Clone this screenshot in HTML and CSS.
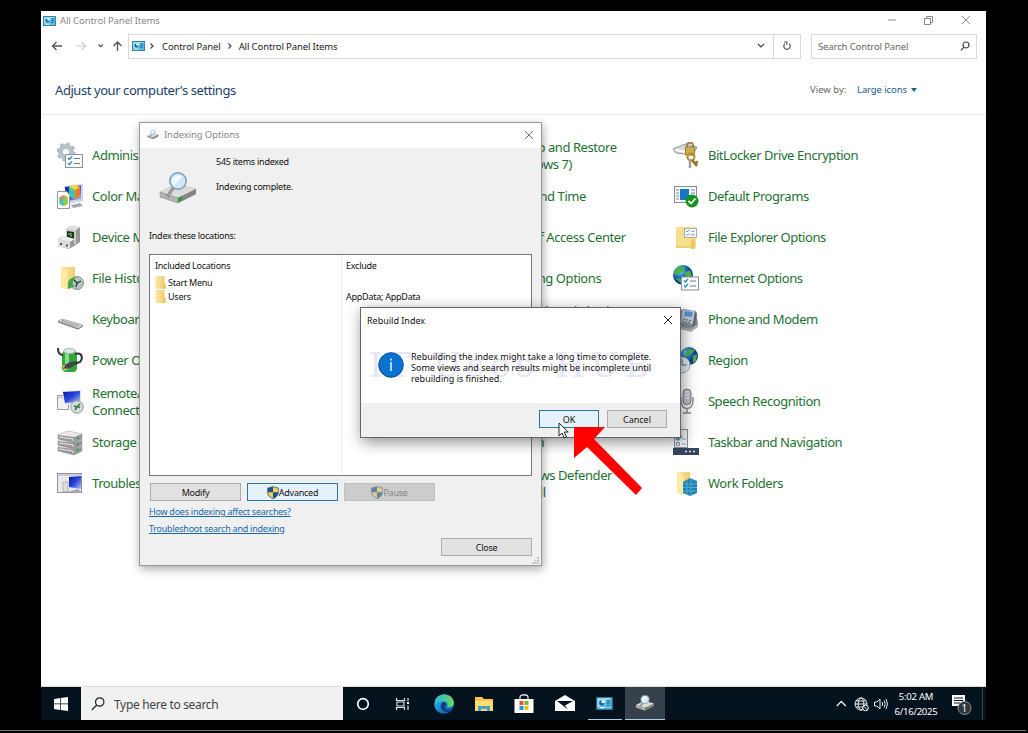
FILE: index.html
```
<!DOCTYPE html>
<html lang="en">
<head>
  <meta charset="UTF-8" />
  <meta name="viewport" content="width=device-width, initial-scale=1.0"/>
  <title>All Control Panel Items</title>
  <link rel="stylesheet" href="styles.css">
</head>
<body>
  <svg width="0" height="0" class="defs">
    <defs>
      <linearGradient id="gold" x2="1"><stop stop-color="#fce9a8"/><stop offset="1" stop-color="#eccb68"/></linearGradient>
      <linearGradient id="screen" x2="1" y2="1"><stop stop-color="#0718a8"/><stop offset=".5" stop-color="#2947d8"/><stop offset="1" stop-color="#b9c9f7"/></linearGradient>
      <radialGradient id="globe" cx=".35" cy=".3"><stop stop-color="#9ddcff"/><stop offset=".5" stop-color="#2584cf"/><stop offset="1" stop-color="#0b3f8c"/></radialGradient>
      <linearGradient id="edgeBlue" x2=".8" y2="1"><stop stop-color="#36c5b5"/><stop offset=".45" stop-color="#1d9be0"/><stop offset="1" stop-color="#0b4fa8"/></linearGradient>
      <linearGradient id="edgeGreen" x2="1"><stop stop-color="#2fb8d8"/><stop offset="1" stop-color="#69d85c"/></linearGradient>
    </defs>
    <symbol id="cpanel" viewBox="0 0 14 11">
      <rect x=".5" y=".5" width="13" height="10" fill="#5cbfe6" stroke="#2b7798"/>
      <path d="M1 1h12L1 9z" fill="#a4e0f5"/>
      <circle cx="4.600" cy="5" r="2.200" fill="#1b6e9b"/><path d="M4.600 5V2.600A2.400 2.400 0 0 1 7 5z" fill="#fff"/>
      <path d="M8.500 3h3.500M8.500 5h3.500M8.500 7h3.500" stroke="#1b6e9b"/><path d="M3 9h4" stroke="#fff"/>
    </symbol>
    <symbol id="drive" viewBox="0 0 40 34">
      <path d="M2 21 18 13 38 18v5L20 32 2 26z" fill="#8a8a8a"/>
      <path d="M2 21 18 13 38 18 20 27z" fill="#dcdcdc"/>
      <path d="M2 21 20 27v5L2 26z" fill="#b4b4b4" stroke="#888" stroke-width=".5"/>
      <path d="M20 27 38 18v5L20 32z" fill="#858585"/>
      <path d="m20 27 4-2v4l-4 2z" fill="#2c9a34"/>
      <path d="M16 16 9 26" stroke="#777" stroke-width="3"/><path d="M16 16 9 26" stroke="#ccc"/>
      <circle cx="20" cy="10" r="8.200" fill="#cfe8fa" stroke="#7f9db6" stroke-width="1.500"/>
      <path d="M14 10a6 6 0 0 1 10-4l-8 9z" fill="#f2faff"/>
    </symbol>
    <symbol id="shield" viewBox="0 0 12 13">
      <path d="M6 .5 11.500 2v4c0 3.500-2.500 5.500-5.500 6.700C3 11.500.5 9.500.5 6V2z" fill="#1c5585" stroke="#4c6a80" stroke-width=".6"/>
      <path d="M6 1 11 2.400V6.300H6zM1 6.300h5v5.900C3 11 1.200 9.200 1 6.300z" fill="#f1cf63"/>
    </symbol>
    <symbol id="checklist" viewBox="0 0 18 14">
      <rect x=".5" y=".5" width="17" height="13" fill="#fafafa" stroke="#8a929a"/>
      <path d="m3 4 1.300 1.500L7 2.500M3 9l1.300 1.500L7 7.500" fill="none" stroke="#258ac0" stroke-width="1.200"/>
      <path d="M9 4.500h6M9 9.500h6" stroke="#687c92"/>
    </symbol>
    <symbol id="folder" viewBox="0 0 10 13">
      <path d="M0 0h9v7l1 1v5H0z" fill="url(#gold)"/><path d="M8 13V8l1-1 1 1v5z" fill="#e9c85f"/>
    </symbol>
  </svg>

  <div class="desktop">
    <main class="explorer">
      <header class="titlebar">
        <svg class="app-icon"><use href="#cpanel"/></svg>
        <span class="title">All Control Panel Items</span>
        <svg class="window-buttons" viewBox="0 0 82 10">
          <path d="M0 5h8M74 1l8 8M82 1l-8 8" fill="none" stroke="#888"/>
          <path d="M36.500 3.500h6v6h-6zM38.500 3V1.500h6v6H43" fill="none" stroke="#888"/>
        </svg>
      </header>

      <nav class="toolbar">
        <svg class="nav-arrows" viewBox="0 0 72 12">
          <path d="M11 6H1.500M5.500 2l-4 4 4 4" fill="none" stroke="#555" stroke-width="1.300"/>
          <path d="M25 6h9.500M30.500 2l4 4-4 4" fill="none" stroke="#ccc" stroke-width="1.200"/>
          <path d="m47.500 4.500 2.200 2.200 2.200-2.200M66.500 11V2M62.500 6l4-4 4 4" fill="none" stroke="#555" stroke-width="1.300"/>
        </svg>
        <div class="address">
          <svg class="app-icon"><use href="#cpanel"/></svg>
          <svg class="crumb-arrow" viewBox="0 0 4 6"><path d="m.5.5 2.500 2.500L.5 5.500"/></svg>
          <span class="crumb">Control Panel</span>
          <svg class="crumb-arrow" viewBox="0 0 4 6"><path d="m.5.5 2.500 2.500L.5 5.500"/></svg>
          <span class="crumb">All Control Panel Items</span>
          <svg class="drop" viewBox="0 0 8 6"><path d="m1 1 3 3 3-3"/></svg>
        </div>
        <div class="refresh">
          <svg viewBox="0 0 10 10"><path d="M7.200 2.800A3.200 3.200 0 1 1 3 2.600M2 1h2.800v2.800" fill="none" stroke="#555" stroke-width="1.200"/></svg>
        </div>
        <div class="search">
          <span>Search Control Panel</span>
          <svg viewBox="0 0 10 10"><circle cx="6" cy="4" r="3"/><path d="M4 6.200.8 9.400"/></svg>
        </div>
      </nav>

      <section class="heading">
        <h1>Adjust your computer's settings</h1>
        <span class="view-label">View by:</span>
        <span class="view-value">Large icons</span>
        <i class="caret"></i>
      </section>

      <section class="items">
        <div class="item">
          <svg viewBox="0 0 27 27"><circle cx="9" cy="10" r="5.500" fill="none" stroke="#b8c1c9" stroke-width="5"/><circle cx="9" cy="10" r="8.500" fill="none" stroke="#adb7c0" stroke-width="2.200" stroke-dasharray="3.200 3.500"/><use href="#checklist" x="8" y="12" width="18" height="14"/></svg>
          <span>Administrative Tools</span>
        </div>
        <div class="item"><span>AutoPlay</span></div>
        <div class="item"><span>Backup and Restore (Windows 7)</span></div>
        <div class="item">
          <svg viewBox="0 0 27 27"><path d="m0 7 12-5 12 3-4 8-17-2z" fill="#d8d8d8" stroke="#999"/><path d="M3 8l14 3" stroke="#fff" stroke-width="2"/><path d="M14 6V3c0-3 6-3 6 0v3" fill="none" stroke="#9b854e" stroke-width="2"/><rect x="12.500" y="5" width="9" height="8" fill="#d3ad4d" stroke="#9b7e3c"/><circle cx="18" cy="15" r="3.500" fill="none" stroke="#b78a2a" stroke-width="2"/><path d="m19 18 5 6M22 21l3-1" stroke="#9b6e13" stroke-width="2.500"/><path d="M17 17v9" stroke="#9c9c9c" stroke-width="2.500"/></svg>
          <span>BitLocker Drive Encryption</span>
        </div>

        <div class="item">
          <svg viewBox="0 0 27 27"><path d="m7 3 19-2v17l-15 3z" fill="#d1d5df"/><path d="m8 4 16-1.500V16L9 18z" fill="url(#screen)"/><path d="m12 4 6-2 5 2v9l-5 3-6-3z" fill="#f3d72e"/><path d="m12 4 6 3v9l-6-3z" fill="#3cc7ad"/><path d="m18 7 5-3v9l-5 3z" fill="#ed7735"/><path d="M14 22l9-2 3 3-10 2z" fill="#a6a8ae"/><path d="M.5 8.500h9l3 3v14H.5z" fill="#fff" stroke="#999"/><path d="m2.500 14 4-2 4 2v7l-4 2-4-2z" fill="#f28f34"/><path d="m2.500 14 4 2v7l-4-2z" fill="#43bfd2"/><path d="m6.500 16 4-2v7l-4 2z" fill="#7ed348"/></svg>
          <span>Color Management</span>
        </div>
        <div class="item"><span>Credential Manager</span></div>
        <div class="item"><span>Date and Time</span></div>
        <div class="item">
          <svg viewBox="0 0 27 27"><rect x="1.500" y="3.500" width="22" height="16" fill="#f8f8f8" stroke="#8a8f96"/><rect x="7" y="6" width="9" height="11" fill="#1678c8"/><path d="M3 7h3M3 10h3M3 13h3M3 16h3M18 7h4M18 10h4" stroke="#72889a"/><circle cx="19" cy="18" r="6.500" fill="#13951c"/><path d="m15.500 18 2.500 2.500 4.500-5" fill="none" stroke="#fff" stroke-width="1.800"/></svg>
          <span>Default Programs</span>
        </div>

        <div class="item">
          <svg viewBox="0 0 27 27"><path d="m9 5 4-3 10 1v15l-6 4-8-2z" fill="#999"/><path d="m9 5 10 1v14L9 18z" fill="#cfcfcf"/><path d="m9 5 4-3 10 1-4 3z" fill="#e4e4e4"/><path d="m10 7 7 1v7l-7-1z" fill="#272c28"/><path d="M11 10h3v3" fill="none" stroke="#3b9f3b" stroke-width="2"/><path d="m1 15 5-3 11 3v7l-5 3-11-3z" fill="#999"/><path d="m1 15 12 3v7L1 22z" fill="#ddd"/><path d="m1 15 5-3 12 3-5 3z" fill="#eee"/><path d="M4 21v-2M10 22.500v-2" stroke="#555" stroke-width="2"/></svg>
          <span>Device Manager</span>
        </div>
        <div class="item"><span>Devices and Printers</span></div>
        <div class="item"><span>Ease of Access Center</span></div>
        <div class="item">
          <svg viewBox="0 0 27 27"><path d="M3 3h20v21H3z" fill="#f8df8c"/><path d="M18 25v-8l2-3 2 3v8z" fill="#ebc762"/><use href="#checklist" x="11" y="4" width="13" height="10"/><path d="M3 23h15" stroke="#dfbd5d"/></svg>
          <span>File Explorer Options</span>
        </div>

        <div class="item">
          <svg viewBox="0 0 27 27"><path d="M4 2h14v14l2 2v5L9 24 4 23z" fill="url(#gold)"/><path d="m4 2 6 4v18l-6-2z" fill="#ffe9a5"/><circle cx="20" cy="18" r="6.500" fill="#b9c5c3" stroke="#7f8e8b"/><path d="m17 15 3 3 4-2M20 18l-1 4" fill="none" stroke="#26312e" stroke-width="1.200"/><path d="M11 19c0-5 4-7 8-6-3 2-4 4-3 7l2 1-7 3z" fill="#42a644"/></svg>
          <span>File History</span>
        </div>
        <div class="item"><span>Fonts</span></div>
        <div class="item"><span>Indexing Options</span></div>
        <div class="item">
          <svg viewBox="0 0 27 27"><circle cx="10" cy="10" r="10" fill="url(#globe)"/><path d="M2 5c3-4 8-4 10-3l-2 4-5 4-4-1zM11 8l6-3 2 6-5 2zM2 13l6 1 1 5z" fill="#51ad45"/><use href="#checklist" x="8" y="11" width="18" height="15"/></svg>
          <span>Internet Options</span>
        </div>

        <div class="item">
          <svg viewBox="0 0 27 27"><path d="m1 15 4-2 21 6-5 4z" fill="#d3d5d7" stroke="#a0a2a5" stroke-width=".8"/><path d="m5 14.500 17 5M4 16l17 5" stroke="#868c94" stroke-dasharray="2 1"/><path d="m1 16 20 7 5-3" fill="none" stroke="#777"/></svg>
          <span>Keyboard</span>
        </div>
        <div class="item"><span>Mouse</span></div>
        <div class="item"><span>Network and Sharing Center</span></div>
        <div class="item">
          <svg viewBox="0 0 27 27"><path d="m4 5 7-2 12 2 2 13-6 7-15-4z" fill="#858c94"/><path d="m10 4 12 1-2 13-12-2z" fill="#c4cdd6"/><path d="m12 5 8 1-1 5-8-1z" fill="#5794cf"/><path d="m10 13 9 2M9 15l9 2" stroke="#50606e" stroke-dasharray="2 1"/><path d="m22 6 2 1-2 12-3 3z" fill="#5e666e"/><path d="m3 19 14 4 8-5v3l-7 5L3 22z" fill="#aab0b6"/></svg>
          <span>Phone and Modem</span>
        </div>

        <div class="item">
          <svg viewBox="0 0 27 27"><rect x="5" y="4" width="15" height="21" rx="4" fill="#33a73f"/><path d="M8 5h4v18H8z" fill="#8ade88"/><ellipse cx="12.500" cy="4" rx="6" ry="2.500" fill="#dce8e2" stroke="#a1b5aa"/><path d="M1 1q0 7 5 7M18 7c8-2 8 5 5 8l-5 2" fill="none" stroke="#333" stroke-width="2"/><path d="m6 19 7-4 7-1-3 5-8 4z" fill="#454545"/><path d="m4 20 4-1M6 23l4-1" stroke="#e1c557" stroke-width="1.500"/></svg>
          <span>Power Options</span>
        </div>
        <div class="item"><span>Programs and Features</span></div>
        <div class="item"><span>Recovery</span></div>
        <div class="item">
          <svg viewBox="0 0 27 27"><circle cx="16" cy="9" r="9" fill="url(#globe)"/><path d="m13 2 9 1-4 4-5 3zM20 9l4-2-1 7-3 2z" fill="#51ad45"/><circle cx="9" cy="18" r="8" fill="#e8edf2" stroke="#9ba9b6"/><path d="M9 12v6h5" fill="none" stroke="#527089"/></svg>
          <span>Region</span>
        </div>

        <div class="item">
          <svg viewBox="0 0 27 27"><path d="M.5 7.500h11v14H.5z" fill="#f0f2f5" stroke="#999"/><path d="M1 9.500h9" stroke="#ccc" stroke-width="2"/><path d="m5 3 19-1v13L8 17z" fill="#e0e3ea"/><path d="m6 4 17-1v11L8 15z" fill="url(#screen)"/><circle cx="20" cy="19" r="6.300" fill="#d8d9da" stroke="#989a9c"/><path d="m17 18 3 1-2 3M23 16l-2 2 2 2" fill="none" stroke="#25823c" stroke-width="1.600"/></svg>
          <span>RemoteApp and Desktop Connections</span>
        </div>
        <div class="item"><span>Security and Maintenance</span></div>
        <div class="item"><span>Sound</span></div>
        <div class="item">
          <svg viewBox="0 0 27 27"><path d="M8 9v4c0 10 12 10 12 0V9M14 20v5M10 25h8" fill="none" stroke="#8b8f98" stroke-width="1.500"/><rect x="10" y="1" width="8" height="16" rx="4" fill="#bbbfc8" stroke="#797e87"/><path d="M12 4h4M12 7h4M12 10h4" stroke="#f8f8f8"/></svg>
          <span>Speech Recognition</span>
        </div>

        <div class="item">
          <svg viewBox="0 0 27 27"><g id="disks"><path d="m1 18 10-4 14 3v5l-8 4L1 22z" fill="#999" stroke="#888" stroke-width=".5"/><path d="m1 18 10-4 14 3-8 3z" fill="#e9e9e9"/><path d="m2 20 14 2v2" fill="none" stroke="#e8e8e8"/><path d="M21 20v2" stroke="#35a43a" stroke-width="2"/></g><use href="#disks" y="-6"/><use href="#disks" y="-12"/></svg>
          <span>Storage Spaces</span>
        </div>
        <div class="item"><span>Sync Center</span></div>
        <div class="item"><span>System</span></div>
        <div class="item">
          <svg viewBox="0 0 27 27"><rect x="1.500" y=".5" width="13" height="18" fill="#f4f5f6" stroke="#878e96"/><path d="m3 9 2 2 4-4" fill="none" stroke="#2385b5" stroke-width="1.500"/><path d="M3.500 13.500h3v3h-3zM9 10h4M9 15h4" fill="none" stroke="#9099a2"/><path d="M0 19h26v7H0z" fill="#34445f"/><path d="M12 22.500h2m2 0h2m2 0h2" stroke="#dce4ee" stroke-width="1.500"/></svg>
          <span>Taskbar and Navigation</span>
        </div>

        <div class="item">
          <svg viewBox="0 0 27 27"><rect x=".5" y="3.500" width="24" height="19" fill="#e8eaef" stroke="#8c929c"/><path d="M1 5h24" stroke="#c8ced6" stroke-width="2"/><path d="m12 7 12-1v13l-12-2z" fill="url(#screen)"/><path d="M6 12h5v10H6z" fill="#ddd" stroke="#999" stroke-width=".6"/><path d="m10 22 11-3 4 4z" fill="#a7a9ad"/></svg>
          <span>Troubleshooting</span>
        </div>
        <div class="item"><span>User Accounts</span></div>
        <div class="item"><span>Windows Defender Firewall</span></div>
        <div class="item">
          <svg viewBox="0 0 27 27"><path d="M4 2h13v20l-8 3-5-3z" fill="url(#gold)"/><path d="m4 2 6 4v19l-6-3z" fill="#ffe9a5"/><path d="m10 12 7-4 7 3v12l-7 3-7-3z" fill="#1e83b1"/><path d="M10 14h14M10 17.500h14M10 21h14M14 11v14M18 9v16" stroke="#4fabd0"/></svg>
          <span>Work Folders</span>
        </div>
      </section>
    </main>

    <footer class="taskbar">
      <div class="start"><svg viewBox="0 0 14 14"><path d="M0 2l6-1v5.600H0zM6.700.9 14 0v6.600H6.700zM0 7.300h6V13l-6-1zM6.700 7.300H14V14l-7.300-1z" fill="#fff"/></svg></div>
      <div class="task-search">
        <svg viewBox="0 0 14 14"><circle cx="8.700" cy="5" r="4.200"/><path d="M5.700 8 .8 13"/></svg>
        <span>Type here to search</span>
      </div>
      <div class="task"><svg viewBox="0 0 20 20"><circle cx="10" cy="10" r="5.300" fill="none" stroke="#fff" stroke-width="1.700"/></svg></div>
      <div class="task"><svg viewBox="0 0 20 20"><path d="M3.500 4v2.500h8V4M3.500 16v-2.500h8V16M4 8h7v4H4zM15 4v3M15 11.500V16" fill="none" stroke="#ddd" stroke-width="1.200"/><path d="M14 8h2v2h-2z" fill="#fff"/></svg></div>
      <div class="task"><svg viewBox="0 0 20 20"><circle cx="10" cy="10" r="9.800" fill="url(#edgeBlue)"/><path d="M1 7C4-2 19-2 20 9c0 4-4 5-7 4 2-2 0-6-4-6-3 0-6 1-8 4z" fill="url(#edgeGreen)"/><path d="M9 8c-5 3-1 11 5 10 2 0 4-1 5-3-3 2-8 1-8-2 0-1 2-2 1-4-1-1-2-1-3-1z" fill="#123f80"/></svg></div>
      <div class="task"><svg viewBox="0 0 20 20"><path d="M1 3h7l2 2h9v12H1z" fill="#f4c64e"/><path d="M1 7h18v10H1z" fill="#ffdc71"/><path d="M4 17v-5h12v5h-3v-2H7v2z" fill="#4a9fc9"/></svg></div>
      <div class="task"><svg viewBox="0 0 20 20"><path d="M6 6V3c0-3 8-3 8 0v3" fill="none" stroke="#ddd" stroke-width="1.300"/><path d="M.5 5h19v14h-19z" fill="#fff"/><path d="M5.500 7h4v4h-4z" fill="#e6532a"/><path d="M10.500 7h4v4h-4z" fill="#7fb52b"/><path d="M5.500 12h4v4h-4z" fill="#2892dc"/><path d="M10.500 12h4v4h-4z" fill="#f5b81e"/></svg></div>
      <div class="task"><svg viewBox="0 0 20 20"><path d="M0 7 10 1l10 6v10H0z" fill="#fff"/><path d="M2 7h16l-8 4.500 3 4z" fill="#06131d"/></svg></div>
      <div class="task open"><svg class="panel-icon"><use href="#cpanel"/></svg></div>
      <div class="task open active"><svg><use href="#drive"/></svg></div>
      <div class="tray">
        <svg viewBox="0 0 52 16"><g fill="none" stroke="#eee"><path d="m.8 10 4.500-4.500L9.800 10" stroke-width="1.300"/><circle cx="25" cy="8" r="6"/><path d="M19 8h12M20 5h10M20 11h7"/><ellipse cx="25" cy="8" rx="2.800" ry="6"/><path d="M38.500 6v4h2.500l3 3V3l-3 3zM46 6q1.300 2 0 4M48 4.500q2.500 3.500 0 7M50 3q3 5 0 10"/></g><circle cx="29.500" cy="12" r="2.800" fill="#06131d" stroke="#fff"/><path d="m27.700 10.200 3.600 3.600" stroke="#fff"/></svg>
        <div class="clock"><span>5:02 AM</span><span>6/16/2025</span></div>
        <svg class="notify" viewBox="0 0 22 22"><path d="M1 2h13v11h-4l-3 3v-3H1z" fill="#fff"/><path d="M3 5h9M3 7.500h9M3 10h6" stroke="#06131d"/><circle cx="13.500" cy="15" r="6.500" fill="#30343c" stroke="#8b8f95"/><text x="10.500" y="18.700">1</text></svg>
      </div>
    </footer>

    <div class="dialog indexing">
      <header class="dialog-title">
        <svg class="small-drive"><use href="#drive"/></svg>
        <span>Indexing Options</span>
        <svg class="close" viewBox="0 0 10 10"><path d="m1 1 8 8M9 1 1 9"/></svg>
      </header>
      <div class="dialog-body">
        <div class="summary">
          <svg><use href="#drive"/></svg>
          <div class="status"><span>545 items indexed</span><span>Indexing complete.</span></div>
        </div>
        <div class="list-label">Index these locations:</div>
        <div class="locations">
          <div class="included">
            <div class="col-head">Included Locations</div>
            <div class="location"><svg><use href="#folder"/></svg>Start Menu</div>
            <div class="location"><svg><use href="#folder"/></svg>Users</div>
          </div>
          <div class="excluded">
            <div class="col-head">Exclude</div>
            <div class="location"></div>
            <div class="location">AppData; AppData</div>
          </div>
        </div>
        <div class="actions">
          <button>Modify</button>
          <button class="selected"><svg><use href="#shield"/></svg>Advanced</button>
          <button class="disabled"><svg><use href="#shield"/></svg>Pause</button>
        </div>
        <a>How does indexing affect searches?</a>
        <a>Troubleshoot search and indexing</a>
        <div class="close-row"><button>Close</button></div>
        <svg class="grip" viewBox="0 0 8 8"><path d="M6 0h2v2H6zM3 3h2v2H3zM6 3h2v2H6zM0 6h2v2H0zM3 6h2v2H3zM6 6h2v2H6z"/></svg>
      </div>
    </div>

    <div class="dialog rebuild">
      <header class="dialog-title">
        <span>Rebuild Index</span>
        <svg class="close" viewBox="0 0 10 10"><path d="m1 1 8 8M9 1 1 9"/></svg>
      </header>
      <div class="message">
        <div class="watermark">IT Uses HUB</div>
        <svg viewBox="0 0 26 26"><circle cx="13" cy="13" r="12.300" fill="#0873d1" stroke="#075296"/><path d="M13 10v9M13 6.500v2" stroke="#fff" stroke-width="1.400"/></svg>
        <p>Rebuilding the index might take a long time to complete.<br>Some views and search results might be incomplete until<br>rebuilding is finished.</p>
      </div>
      <div class="rebuild-actions">
        <button class="selected">OK</button>
        <button>Cancel</button>
      </div>
    </div>

    <svg class="pointer" viewBox="0 0 86 76">
      <path d="M16 5h31L36 17 84 66l-6 7-49-48-13 11z" fill="#f00"/>
      <path d="M1 1v13l3-3 2.300 5 2.200-1-2.300-5h4z" fill="#fff" stroke="#111" stroke-width=".9"/>
    </svg>
  </div>
  <div class="bottom-line"></div>
</body>
</html>
```

FILE: styles.css
```
* { box-sizing: border-box; }
body { margin: 0; width: 1028px; height: 733px; padding: 11px 0 0 41px; background: #000; overflow: hidden; font-family: "Noto Sans", "Open Sans", sans-serif; }
svg { display: block; flex: none; }
.defs { position: absolute; }
.desktop { position: relative; width: 945px; height: 709px; }
.explorer { height: 676px; background: #fff; border: 1px solid #ddd; border-width: 0 0 1px; }

.titlebar { display: flex; align-items: center; height: 19px; padding: 0 16px 0 2px; }
.app-icon { width: 13px; height: 10px; }
.title { margin-left: 4px; font-size: 9.5px; letter-spacing: -0.08px; color: #888; }
.window-buttons { width: 82px; height: 10px; margin-left: auto; margin-bottom: 2px; }
.toolbar { display: flex; align-items: center; height: 26px; margin-top: 3px; padding: 0 9px 0 10px; font-size: 9.5px; letter-spacing: -0.12px; }
.nav-arrows { width: 72px; height: 12px; margin-right: 5px; }
.address { display: flex; align-items: center; width: 646px; height: 25px; padding: 0 8px 0 3px; border: 1px solid #d9d9d9; }
.crumb-arrow { width: 4px; height: 6px; margin: 0 8px 0 5px; }
.crumb + .crumb-arrow { margin: 0 7px; }
.crumb-arrow path, .drop path { fill: none; stroke: #444; stroke-width: 1.2; }
.crumb { color: #222; }
.drop { width: 8px; height: 6px; margin-left: auto; }
.refresh { display: flex; align-items: center; justify-content: center; width: 27px; height: 25px; border: 1px solid #d9d9d9; border-left: 0; }
.refresh svg { width: 10px; height: 10px; }
.search { display: flex; align-items: center; justify-content: space-between; width: 166px; height: 25px; margin-left: auto; padding: 0 6px; border: 1px solid #d9d9d9; color: #666; }
.search svg { width: 10px; height: 10px; fill: none; stroke: #444; stroke-width: 1.2; }

.heading { display: flex; align-items: center; height: 56px; padding: 6px 14px 0; border-bottom: 1px solid #e6ebef; font-size: 9.5px; }
h1 { width: 755px; margin: 0; font-size: 13px; font-weight: normal; letter-spacing: -0.43px; color: #1d3f6b; }
.view-label { width: 47px; color: #666; }
.view-value { letter-spacing: -0.1px; color: #17608f; }
.caret { margin-left: 4px; border: 3px solid transparent; border-top: 4px solid #17608f; border-bottom: 0; }
.items { display: grid; grid-template-columns: repeat(4, 205.3px); grid-auto-rows: 41px; padding: 20px 0 0 16px; }
.item { display: flex; align-items: center; width: 189px; color: #247132; font-size: 13px; line-height: 17px; letter-spacing: -0.43px; }
.item svg { width: 27px; height: 27px; }
.item svg + span { margin-left: 8px; }
.item > span:first-child { margin-left: 35px; }

.dialog { position: absolute; border: 1px solid #999; background: #f0f0f0; box-shadow: 1px 3px 9px rgba(0, 0, 0, .35); font-size: 9px; color: #111; }
.dialog-title { display: flex; align-items: center; background: #fff; }
.close { width: 10px; height: 10px; margin-left: auto; fill: none; stroke: #777; }
.indexing { left: 98px; top: 111px; width: 403px; height: 444px; letter-spacing: -0.25px; }
.indexing .dialog-title { height: 25px; padding: 0 7px 2px; color: #888; font-size: 9.5px; letter-spacing: -0.1px; }
.small-drive { width: 12px; height: 11px; margin-right: 5px; }
.dialog-body { padding: 0 9px; }
.summary { display: flex; height: 80px; }
.summary svg { width: 40px; height: 34px; margin: 23px 18px 0 9px; }
.status { display: flex; flex-direction: column; gap: 12px; padding-top: 7px; line-height: 13px; }
.list-label { height: 26px; line-height: 15px; }
.locations { display: flex; width: 383px; height: 222px; background: #fff; border: 1px solid #777; }
.included { width: 192px; padding: 4px 5px; border-right: 1px solid #eee; }
.excluded { padding: 4px; }
.col-head { height: 16px; line-height: 14px; }
.location { display: flex; align-items: center; height: 14px; }
.location svg { width: 11px; height: 13px; margin-right: 2px; }
.actions { display: flex; gap: 6px; margin: 7px 0 0 1px; }
button { display: flex; align-items: center; justify-content: center; width: 91px; height: 18px; padding: 0; border: 1px solid #adadad; background: #e1e1e1; font: inherit; letter-spacing: inherit; color: #111; }
button svg { width: 12px; height: 13px; }
.selected { border-color: #27779e; background: #e5f1fb; }
.disabled { background: #ccc; border-color: #bfbfbf; color: #858585; }
.disabled svg { opacity: .6; }
a { display: block; width: max-content; height: 17px; line-height: 15px; margin-top: 3px; color: #1769ab; text-decoration: underline; }
a + a { margin-top: 0; }
.close-row { display: flex; justify-content: flex-end; }
.grip { width: 7px; height: 7px; margin: 1px -7px 0 auto; fill: #bbb; }

.rebuild { left: 319px; top: 296px; width: 321px; height: 131px; border-color: #666; box-shadow: 2px 4px 14px rgba(0, 0, 0, .45); }
.rebuild .dialog-title { height: 25px; padding: 0 7px 1px 6px; }
.rebuild .close { stroke: #222; }
.message { position: relative; display: flex; align-items: center; height: 70px; padding: 0 0 7px 17px; background: #fff; }
.message svg { position: relative; width: 26px; height: 26px; }
.message p { position: relative; margin: 8px 0 0 7px; line-height: 10.7px; white-space: nowrap; }
.watermark { position: absolute; left: 8px; top: 12px; font: 34px/40px "DejaVu Serif", serif; letter-spacing: 5.6px; color: #e6e6f9; white-space: nowrap; }
.rebuild-actions { display: flex; justify-content: flex-end; gap: 8px; padding: 7px 13px; }
.rebuild-actions button { width: 60px; }
.pointer { position: absolute; left: 517px; top: 411px; width: 86px; height: 76px; }

.taskbar { display: flex; height: 33px; background: #03121d; color: #fff; }
.start { display: flex; align-items: center; justify-content: center; width: 40px; }
.start svg { width: 14px; height: 14px; }
.task-search { display: flex; align-items: center; width: 262px; padding: 1px 0 0 10px; background: #f1f1f1; color: #444; font-size: 12px; letter-spacing: -0.32px; }
.task-search svg { width: 14px; height: 14px; margin-right: 9px; fill: none; stroke: #222; stroke-width: 1.2; }
.task { display: flex; align-items: center; justify-content: center; width: 40.3px; }
.task svg { width: 20px; height: 20px; }
.task .panel-icon { width: 17px; height: 13px; }
.open { width: 34px; margin: 0 3px; border-bottom: 1px solid #a7d3ee; }
.active { width: 40px; margin: 0; background: #36414b; }
.tray { display: flex; align-items: center; margin-left: auto; padding-right: 9px; border-right: 1px solid #344; margin-right: 3px; font-size: 9.5px; letter-spacing: -0.25px; }
.tray svg { width: 52px; height: 16px; }
.clock { display: flex; flex-direction: column; align-items: center; width: 44px; margin: 0 13px 0 6px; line-height: 15px; white-space: nowrap; }
.tray .notify { width: 22px; height: 22px; }
.notify text { font-size: 10px; fill: #fff; }
.bottom-line { height: 1px; margin: 10px 0 0 -41px; background: #777; width: 1026px; }
```
